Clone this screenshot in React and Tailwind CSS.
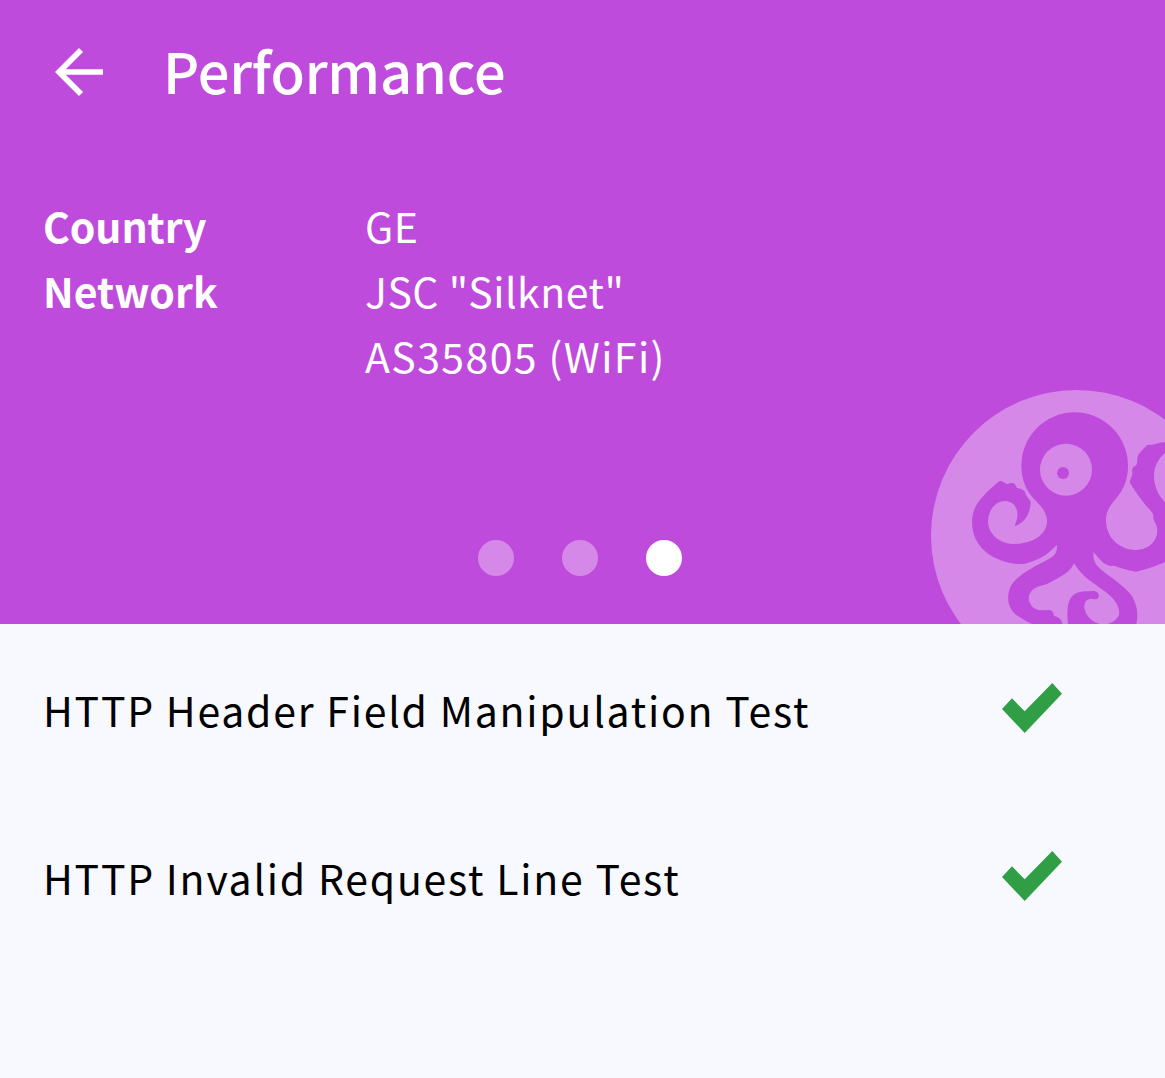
const tests = [
  "HTTP Header Field Manipulation Test",
  "HTTP Invalid Request Line Test",
];

function BackArrow() {
  return (
    <svg width="48" height="48" viewBox="0 0 48 48" className="block shrink-0" fill="none" stroke="white" strokeWidth="5.7">
      <path d="M26 2 4 24l22 22M4.500 24H48" />
    </svg>
  );
}

function Check() {
  return (
    <svg width="60" height="50" viewBox="0 0 60 50" className="block shrink-0" fill="#2f9e44">
      <path d="M0 26 10 15.300l12.700 13L50.300 0 60 10.700 22.700 50Z" />
    </svg>
  );
}

function Octopus() {
  return (
    <svg viewBox="0 0 720 717" className="absolute right-0 bottom-0 h-[239px] w-[240px]">
      <circle cx="455" cy="452" r="437" fill="#d588e7" />
      <g fill="#be4bdb">
        <path d="M289 242C289 290 309 325 335 350C355 370 366 387 366 409C366 447 325 477 267 477C220 475 190 445 189 410C190 372 213 348 242 348C268 350 280 372 277 395C275 410 270 416 270 423C298 415 317 385 317 350L303 330C300 312 288 312 275 308C268 288 262 294 245 297C235 292 230 285 220 290C200 308 185 320 165 344C147 368 141 388 141 412C142 480 190 520 255 534C275 538 290 538 300 536C340 525 365 512 396 479C397 502 390 513 370 523C330 545 279 568 258 602C240 640 250 680 290 700C300 708 310 712 322 717H412C411 702 400 697 387 692C385 680 380 675 372 675C350 677 335 677 322 665C308 650 308 630 320 617C335 602 355 603 370 595C410 575 435 562 447 535C465 565 490 585 520 605C560 632 583 655 583 685C581 700 566 712 548 717H634C640 690 638 660 620 632C600 605 570 585 540 563C515 545 503 530 505 501C520 517 535 540 555 542C562 544 566 541 572 544C590 552 615 557 632 560C665 552 690 545 720 531V352C700 330 687 305 687 272C687 245 700 220 720 204V172C700 172 690 180 680 179L667 180C656 190 650 197 641 208C634 220 639 232 634 240C625 246 619 250 622 262C624 275 612 285 615 293C625 310 635 325 650 345C662 364 680 375 685 390C682 410 697 415 697 435C697 470 670 495 630 495C580 493 543 455 543 405C543 370 565 352 583 328C600 304 609 275 609 242A160 160 0 0 0 289 242Z" />
        <path d="M429 717C425 680 427 650 440 635C455 618 475 620 500 618C515 616 523 625 521 635C518 645 508 643 500 641C485 642 478 650 478 665C480 690 498 709 525 717Z" />
      </g>
      <circle cx="423" cy="254" r="78" fill="#d588e7" />
      <circle cx="414" cy="264" r="18" fill="#be4bdb" />
    </svg>
  );
}

export default function App() {
  return (
    <main className="min-h-[1078px] w-full overflow-hidden bg-[#f8f9fe] font-['Noto_Sans_CJK_SC','Noto_Sans',sans-serif] whitespace-nowrap">
      <header className="relative flex h-[624px] flex-col overflow-hidden bg-[#be4bdb] text-white">
        <div className="flex h-36 items-center pl-[55px]">
          <BackArrow />
          <h1 className="mb-[5px] ml-[60px] text-[56px] leading-none font-medium tracking-[-0.2px]">Performance</h1>
        </div>
        <dl className="mt-[49px] grid grid-cols-[322px_1fr] pl-[43px] text-[41px] leading-[65px]">
          <dt className="font-bold tracking-[-0.1px]">Country</dt>
          <dd className="tracking-[0.5px]">GE</dd>
          <dt className="font-bold">Network</dt>
          <dd>
            <span className="block tracking-[0.5px]">JSC "Silknet"</span>
            <span className="block tracking-[1.4px]">AS35805 (WiFi)</span>
          </dd>
        </dl>
        <nav className="mt-auto mb-12 ml-[478px] flex gap-12">
          <span className="size-9 rounded-full bg-[#d588e7]" />
          <span className="size-9 rounded-full bg-[#d588e7]" />
          <span className="size-9 rounded-full bg-white" />
        </nav>
        <Octopus />
      </header>
      <ul className="text-[41px] tracking-[1.75px] text-black">
        {tests.map((name) => (
          <li key={name} className="flex h-42 items-center justify-between pr-[103px] pl-[43px]">
            <span className="pt-[3px]">{name}</span>
            <Check />
          </li>
        ))}
      </ul>
    </main>
  );
}
